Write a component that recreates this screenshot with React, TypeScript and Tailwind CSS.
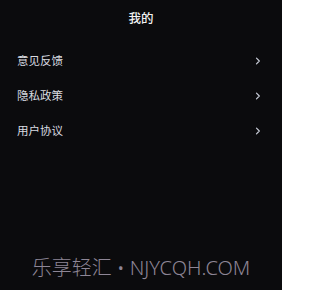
const items = ["意见反馈", "隐私政策", "用户协议"];

function Chevron() {
  return (
    <svg width="6" height="8" viewBox="0 0 6 8" fill="none">
      <path d="M1.5 1.2 L4.3 4 L1.5 6.8" stroke="#c9cdd8" strokeWidth="1.2" strokeLinecap="round" strokeLinejoin="round" />
    </svg>
  );
}

export default function App() {
  return (
    <div
      className="flex h-[290px] w-[282px] flex-col bg-[#0b0b0d] text-white"
      style={{ fontFamily: '"Noto Sans", "Noto Sans CJK SC", sans-serif' }}
    >
      <div className="flex h-[38px] items-center justify-center text-[12.5px] font-medium text-[#f2f2f2]">
        我的
      </div>
      <ul className="mt-[5px] flex flex-col">
        {items.map((item) => (
          <li key={item} className="flex h-[35px] items-center justify-between pl-[17px] pr-[21px]">
            <span className="text-[11.5px] text-[#d9dbe0]">{item}</span>
            <Chevron />
          </li>
        ))}
      </ul>
      <div className="mt-auto flex items-center justify-center pb-[8px] text-[20px] font-light leading-[28px] text-[#8e8696]">
        乐享轻汇 • NJYCQH.COM
      </div>
    </div>
  );
}
